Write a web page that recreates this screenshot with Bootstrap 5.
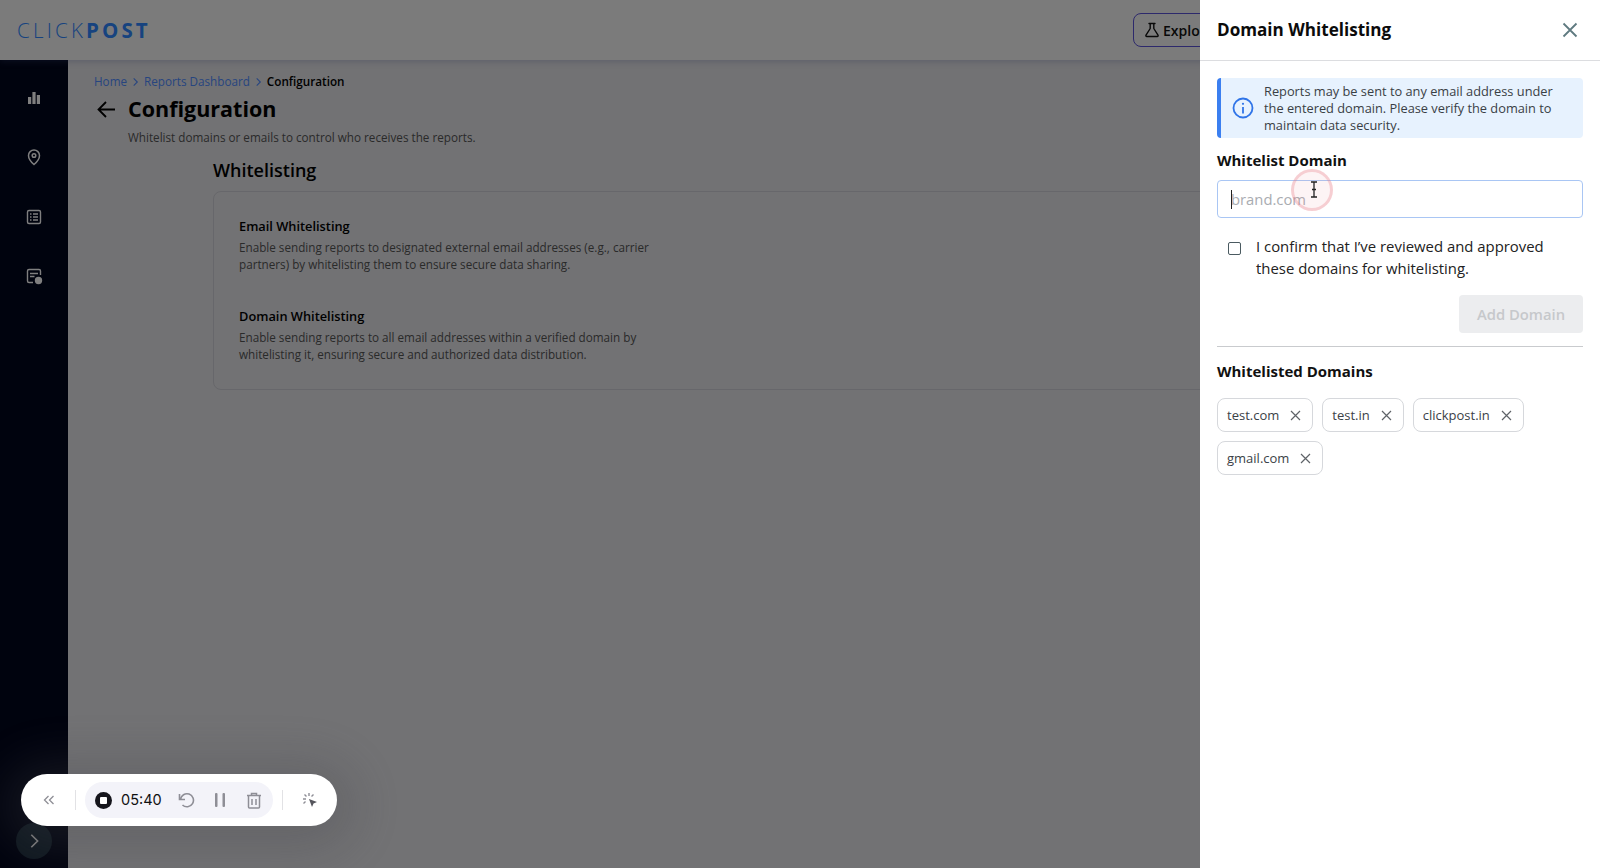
<!doctype html>
<html lang="en">
<head>
<meta charset="utf-8">
<title>Domain Whitelisting</title>
<link href="https://cdn.jsdelivr.net/npm/bootstrap@5.3.0/dist/css/bootstrap.min.css" rel="stylesheet">
<style>
html,body{height:100%;overflow:hidden}
body{font-family:"Open Sans","Noto Sans",sans-serif;background:#e4e4e8;color:#000}
.app-top{height:60px;background:#f6f6f6;box-shadow:0 2px 6px rgba(80,90,160,.25);position:relative;z-index:2}
.brand-logo{font-size:20.5px;letter-spacing:3.2px;color:#2f86ff;font-weight:300;line-height:1;margin-left:17px}
.brand-logo b{font-weight:700;letter-spacing:3.1px}
.explore-btn{height:34px;width:110px;margin-right:357px;border:1.5px solid #5b52d8;border-radius:8px;font-size:14px;font-weight:600;color:#111;background:#f6f6f6;padding:0 0 0 10px;gap:3px;white-space:nowrap;overflow:hidden}
.app-body{height:808px}
.side-rail{width:68px;background:#01061c;padding-top:28px;gap:39.3px;flex:none}
.side-rail svg{display:block;width:20px;height:20px;color:#fff}
.rail-toggle{position:absolute;left:16px;bottom:9px;width:36px;height:36px;border-radius:50%;background:#1d2f3f;display:flex;align-items:center;justify-content:center}
.main-area{padding:13px 0 0 26px;min-width:0}
.crumbs{font-size:11.7px;line-height:17px;margin:0;gap:4px;font-weight:600}
.crumbs a{color:#4f8bff;text-decoration:none;font-weight:400}
.crumbs svg{width:9px;height:10px;color:#4f8bff}
.title-row{margin-top:3px;gap:11px;height:32px}
.title-row svg{margin-left:2px}
.title-row h1{font-size:21.5px;line-height:30px;font-weight:700;margin:0}
.page-sub{font-size:11.7px;line-height:17px;color:#555;margin:4px 0 0 34px}
.wl-wrap{margin:12px 0 0 119px}
.wl-wrap h2{font-size:18px;line-height:24px;font-weight:600;margin:0 0 9px}
.wl-box{width:1200px;height:199px;border:1px solid #cfcfd6;border-radius:8px;padding:25px 25px;font-size:11.7px;line-height:17px}
.wl-box h3{font-size:12.8px;line-height:19px;font-weight:600;margin:0 0 3px}
.wl-box p{width:430px;color:#555;margin:0 0 34px}
.drawer{--bs-offcanvas-width:400px;--bs-offcanvas-border-width:0;color:#111}
.drawer-head{height:61px;padding:0 22px 0 17px;border-bottom:1px solid #dcdde0}
.drawer-head h5{font-size:17.1px;font-weight:700;margin:0;line-height:24px;color:#0b0b0b}
.drawer-body{padding:17px 17px}
.note{background:#e7f2fe;border:0;border-left:4px solid #3b7ff0;border-radius:4px;padding:0 21px 0 11px;height:60px;gap:10px;margin:0;font-size:12.8px;line-height:17px;color:#3a3f45}
.note svg{width:22px;height:22px;flex:none;color:#2f74e8}
.field-label{font-size:15px;line-height:20px;font-weight:700;margin:12px 0 10px;color:#111}
.field-wrap{position:relative}
.domain-input{height:38px;border:1.5px solid #a9c6f4;border-radius:4px;font-size:14.8px;padding:0 13px;font-family:inherit}
.domain-input::placeholder{color:#a9acb1}
.caret-line{position:absolute;left:14px;top:10px;width:1px;height:19px;background:#222}
.cursor-ring{position:absolute;left:74px;top:-11px;width:42px;height:42px;border-radius:50%;border:3px solid rgba(232,120,130,.3);background:rgba(240,150,160,.1)}
.cursor-beam{position:absolute;left:93px;top:1px;width:8px;height:17px;color:#222}
.confirm-row{margin:18px 0 0;padding:0 0 0 11px;gap:15px;font-size:14.9px;line-height:21.5px;color:#222;min-height:0}
.confirm-row .form-check-input{width:13px;height:13px;margin:6px 0 0;flex:none;border:1.5px solid #4a5a60;border-radius:2px;float:none}
.add-btn,.add-btn:disabled{display:block;margin:16px 0 0 auto;width:124px;height:38px;border:0;border-radius:4px;background:#ecedef;color:#c6c8cb;font-size:14.8px;font-weight:600;padding:0;opacity:1}
.drawer-body hr{margin:13px 0 0;border-color:#c9cbce;opacity:1}
.list-title{font-size:15px;line-height:20px;font-weight:700;margin:14px 0 17px;color:#111}
.chip-wrap{gap:9px}
.chip-item{height:34px;border:1px solid #d6d8dc;border-radius:8px;background:#fff;padding:0 11px 0 9px;gap:11px;font-size:13px;color:#3b4147;font-weight:400;line-height:1}
.chip-item svg{width:11px;height:11px;color:#5f6368}
.rec-bar{position:fixed;left:21px;top:774px;width:316px;height:52px;background:#fff;border-radius:26px;box-shadow:0 6px 50px 18px rgba(70,70,75,.3);z-index:1050;padding:0 0 0 22px}
.rec-group{height:36px;background:#f3f3f9;border-radius:18px;margin:0 9px 0 9px;padding:0 0 0 10px;width:188px;flex:none}
.rec-time{font-family:"Inter","Open Sans",sans-serif;font-size:14.5px;color:#111;margin:0 15px 0 9px;line-height:1;width:41px;flex:none}
.rec-div{width:1px;height:20px;background:#e2e2e5;flex:none}
.rec-stop{width:17px;height:17px;border-radius:50%;background:#15151c;display:flex;align-items:center;justify-content:center;flex:none}
.rec-stop i{display:block;width:7px;height:7px;background:#fff;border-radius:1px}
.rec-ico{color:#8e8e96;flex:none;display:block}
.rec-pause{margin-left:19px}
.rec-bin{margin-left:20px}
.rec-back{margin-right:20px}
.rec-click{margin-left:19px}
</style>
</head>
<body>
<header class="app-top d-flex align-items-center justify-content-between">
  <div class="brand-logo">CLICK<b>POST</b></div>
  <button class="explore-btn d-flex align-items-center" type="button">
    <svg width="16" height="16" viewBox="0 0 16 16" fill="none" stroke="currentColor" stroke-width="1.400" stroke-linejoin="round" stroke-linecap="round"><path d="M5 1.500h6M6.200 1.500v5L2 13.200c-.4.7 0 1.300.8 1.300h10.400c.8 0 1.200-.6.8-1.300L9.800 6.500v-5"/></svg>
    Explore
  </button>
</header>
<div class="app-body d-flex">
  <nav class="side-rail d-flex flex-column align-items-center position-relative">
    <svg viewBox="0 0 20 20" fill="currentColor"><rect x="4" y="9" width="3.200" height="7"/><rect x="8.400" y="4" width="3.200" height="12"/><rect x="12.800" y="7" width="3.200" height="9"/></svg>
    <svg viewBox="0 0 20 20" fill="none" stroke="currentColor" stroke-width="1.500"><path d="M10 17.500s-5.500-4.600-5.500-9a5.500 5.500 0 0 1 11 0c0 4.400-5.500 9-5.500 9z"/><circle cx="10" cy="8.500" r="1.800"/></svg>
    <svg viewBox="0 0 20 20" fill="none" stroke="currentColor" stroke-width="1.400"><rect x="3.500" y="3.500" width="13" height="13" rx="1.500"/><path d="M6 7h1.500M9 7h5M6 10h1.500M9 10h5M6 13h1.500M9 13h5"/></svg>
    <svg viewBox="0 0 20 20" fill="none" stroke="currentColor" stroke-width="1.400"><path d="M9 16.500H5A1.500 1.500 0 0 1 3.500 15V5A1.500 1.500 0 0 1 5 3.500h10A1.500 1.500 0 0 1 16.500 5v4M6 7.500h8M6 10.500h4.500"/><circle cx="14.500" cy="14.500" r="3" fill="currentColor"/></svg>
    <div class="rail-toggle"><svg viewBox="0 0 20 20" fill="none" stroke="currentColor" stroke-width="1.800" style="width:18px;height:18px"><path d="M7 3l7 7-7 7"/></svg></div>
  </nav>
  <main class="main-area flex-grow-1">
    <div class="crumbs d-flex align-items-center">
      <a href="#">Home</a>
      <svg viewBox="0 0 10 10" fill="none" stroke="currentColor" stroke-width="1.200"><path d="M3 1l4 4-4 4"/></svg>
      <a href="#">Reports Dashboard</a>
      <svg viewBox="0 0 10 10" fill="none" stroke="currentColor" stroke-width="1.200"><path d="M3 1l4 4-4 4"/></svg>
      <span>Configuration</span>
    </div>
    <div class="title-row d-flex align-items-center">
      <svg width="21" height="20" viewBox="0 0 21 20" fill="none" stroke="#000" stroke-width="1.800"><path d="M19 10.500H3M10 3l-7.500 7.500L10 18"/></svg>
      <h1>Configuration</h1>
    </div>
    <p class="page-sub">Whitelist domains or emails to control who receives the reports.</p>
    <section class="wl-wrap">
      <h2>Whitelisting</h2>
      <div class="wl-box">
        <h3>Email Whitelisting</h3>
        <p>Enable sending reports to designated external email addresses (e.g., carrier partners) by whitelisting them to ensure secure data sharing.</p>
        <h3>Domain Whitelisting</h3>
        <p>Enable sending reports to all email addresses within a verified domain by whitelisting it, ensuring secure and authorized data distribution.</p>
      </div>
    </section>
  </main>
</div>

<div class="offcanvas-backdrop fade show"></div>

<aside class="offcanvas offcanvas-end show drawer" tabindex="-1">
  <div class="drawer-head d-flex align-items-center justify-content-between">
    <h5>Domain Whitelisting</h5>
    <svg width="16" height="16" viewBox="0 0 16 16" fill="none" stroke="#5f7a80" stroke-width="1.800"><path d="M1.500 1.500l13 13M14.500 1.500l-13 13"/></svg>
  </div>
  <div class="drawer-body">
    <div class="alert note d-flex align-items-center" role="alert">
      <svg viewBox="0 0 22 22" fill="none" stroke="currentColor" stroke-width="1.800"><circle cx="11" cy="11" r="9.500"/><path d="M11 10v6.500"/><circle cx="11" cy="6.800" r="1.100" fill="currentColor" stroke="none"/></svg>
      <div>Reports may be sent to any email address under the entered domain. Please verify the domain to maintain data security.</div>
    </div>
    <label class="form-label d-block field-label" for="dom">Whitelist Domain</label>
    <div class="field-wrap">
      <input id="dom" class="form-control domain-input" type="text" placeholder="brand.com">
      <span class="caret-line"></span>
      <span class="cursor-ring"></span>
      <svg class="cursor-beam" viewBox="0 0 8 17" fill="none" stroke="currentColor" stroke-width="1.300"><path d="M1 1h6M4 1v15M1 16h6M2 8.500h4"/></svg>
    </div>
    <div class="form-check d-flex confirm-row">
      <input class="form-check-input" type="checkbox" id="cf">
      <label class="form-check-label" for="cf">I confirm that I’ve reviewed and approved these domains for whitelisting.</label>
    </div>
    <button class="btn add-btn" type="button" disabled>Add Domain</button>
    <hr>
    <div class="list-title">Whitelisted Domains</div>
    <div class="d-flex flex-wrap chip-wrap">
      <span class="chip-item d-inline-flex align-items-center">test.com <svg viewBox="0 0 11 11" fill="none" stroke="currentColor" stroke-width="1.200"><path d="M1 1l9 9M10 1l-9 9"/></svg></span>
      <span class="chip-item d-inline-flex align-items-center">test.in <svg viewBox="0 0 11 11" fill="none" stroke="currentColor" stroke-width="1.200"><path d="M1 1l9 9M10 1l-9 9"/></svg></span>
      <span class="chip-item d-inline-flex align-items-center">clickpost.in <svg viewBox="0 0 11 11" fill="none" stroke="currentColor" stroke-width="1.200"><path d="M1 1l9 9M10 1l-9 9"/></svg></span>
      <span class="chip-item d-inline-flex align-items-center">gmail.com <svg viewBox="0 0 11 11" fill="none" stroke="currentColor" stroke-width="1.200"><path d="M1 1l9 9M10 1l-9 9"/></svg></span>
    </div>
  </div>
</aside>

<div class="rec-bar d-flex align-items-center">
  <svg class="rec-ico rec-back" width="12" height="10" viewBox="0 0 12 10" fill="none" stroke="currentColor" stroke-width="1.300"><path d="M5.500 1L1.500 5l4 4M10.500 1l-4 4 4 4"/></svg>
  <span class="rec-div"></span>
  <div class="rec-group d-flex align-items-center">
    <span class="rec-stop"><i></i></span>
    <span class="rec-time">05:40</span>
    <svg class="rec-ico" width="18" height="18" viewBox="0 0 18 18" fill="none" stroke="currentColor" stroke-width="1.600"><path d="M3.500 8.500A6.500 6.500 0 1 1 5.500 14M2.500 3v5.500H8"/></svg>
    <svg class="rec-ico rec-pause" width="12" height="16" viewBox="0 0 12 16" fill="currentColor"><rect x="1" y="1" width="2.500" height="14" rx="1"/><rect x="8.500" y="1" width="2.500" height="14" rx="1"/></svg>
    <svg class="rec-ico rec-bin" width="16" height="17" viewBox="0 0 16 17" fill="none" stroke="currentColor" stroke-width="1.500"><path d="M1 3.500h14M5.500 3.500V1.500h5v2M2.500 3.500V15a1 1 0 0 0 1 1h9a1 1 0 0 0 1-1V3.500M6 7v6M10 7v6"/></svg>
  </div>
  <span class="rec-div"></span>
  <svg class="rec-ico rec-click" width="16" height="16" viewBox="0 0 16 16" fill="none" stroke="currentColor" stroke-width="1.400"><path d="M1 7h3M7 1v3M2.500 2.500l2 2M11.500 2.500l-2 2M1.500 11.500l2-2"/><path d="M7 7l8 3-3.500 1.500L10 15z" fill="#55555c" stroke="none"/></svg>
</div>
</body>
</html>
